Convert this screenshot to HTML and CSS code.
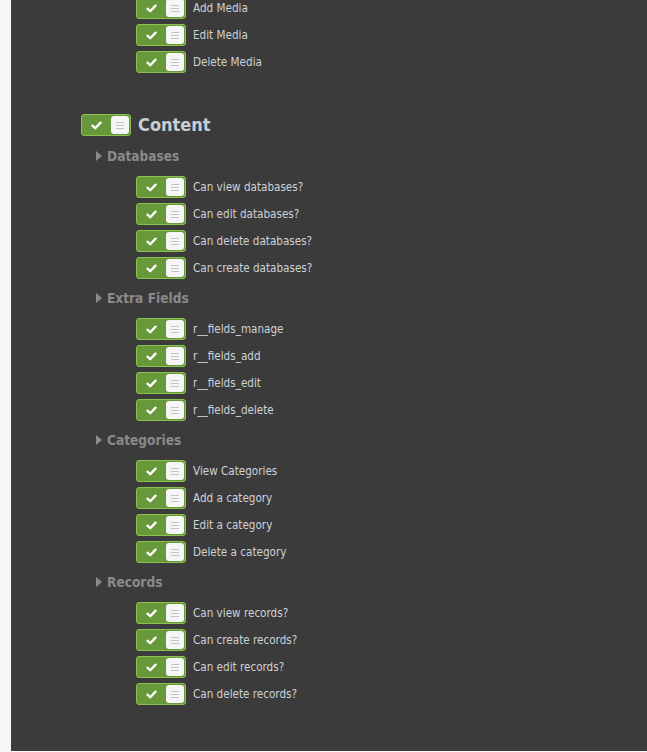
FILE: index.html
```html
<!DOCTYPE html>
<html>
<head>
<meta charset="utf-8">
<link rel="stylesheet" href="styles.css">
</head>
<body>
<div class="panel">
  <ul class="perms top">
    <li class="perm"><span class="toggle"><span class="on"><svg viewBox="0 0 12 10" class="chk"><path d="M1.5 5.2 L4.6 8 L10.5 1.8" /></svg></span><span class="knob"><i></i><i></i><i></i></span></span><span class="label">Add Media</span></li>
    <li class="perm"><span class="toggle"><span class="on"><svg viewBox="0 0 12 10" class="chk"><path d="M1.5 5.2 L4.6 8 L10.5 1.8" /></svg></span><span class="knob"><i></i><i></i><i></i></span></span><span class="label">Edit Media</span></li>
    <li class="perm"><span class="toggle"><span class="on"><svg viewBox="0 0 12 10" class="chk"><path d="M1.5 5.2 L4.6 8 L10.5 1.8" /></svg></span><span class="knob"><i></i><i></i><i></i></span></span><span class="label">Delete Media</span></li>
  </ul>

  <div class="group">
    <div class="group-head"><span class="toggle"><span class="on"><svg viewBox="0 0 12 10" class="chk"><path d="M1.5 5.2 L4.6 8 L10.5 1.8" /></svg></span><span class="knob"><i></i><i></i><i></i></span></span><span class="group-title">Content</span></div>

    <div class="section">
      <div class="section-head"><span class="tri"></span>Databases</div>
      <ul class="perms">
        <li class="perm"><span class="toggle"><span class="on"><svg viewBox="0 0 12 10" class="chk"><path d="M1.5 5.2 L4.6 8 L10.5 1.8" /></svg></span><span class="knob"><i></i><i></i><i></i></span></span><span class="label">Can view databases?</span></li>
        <li class="perm"><span class="toggle"><span class="on"><svg viewBox="0 0 12 10" class="chk"><path d="M1.5 5.2 L4.6 8 L10.5 1.8" /></svg></span><span class="knob"><i></i><i></i><i></i></span></span><span class="label">Can edit databases?</span></li>
        <li class="perm"><span class="toggle"><span class="on"><svg viewBox="0 0 12 10" class="chk"><path d="M1.5 5.2 L4.6 8 L10.5 1.8" /></svg></span><span class="knob"><i></i><i></i><i></i></span></span><span class="label">Can delete databases?</span></li>
        <li class="perm"><span class="toggle"><span class="on"><svg viewBox="0 0 12 10" class="chk"><path d="M1.5 5.2 L4.6 8 L10.5 1.8" /></svg></span><span class="knob"><i></i><i></i><i></i></span></span><span class="label">Can create databases?</span></li>
      </ul>
    </div>

    <div class="section">
      <div class="section-head"><span class="tri"></span>Extra Fields</div>
      <ul class="perms">
        <li class="perm"><span class="toggle"><span class="on"><svg viewBox="0 0 12 10" class="chk"><path d="M1.5 5.2 L4.6 8 L10.5 1.8" /></svg></span><span class="knob"><i></i><i></i><i></i></span></span><span class="label">r__fields_manage</span></li>
        <li class="perm"><span class="toggle"><span class="on"><svg viewBox="0 0 12 10" class="chk"><path d="M1.5 5.2 L4.6 8 L10.5 1.8" /></svg></span><span class="knob"><i></i><i></i><i></i></span></span><span class="label">r__fields_add</span></li>
        <li class="perm"><span class="toggle"><span class="on"><svg viewBox="0 0 12 10" class="chk"><path d="M1.5 5.2 L4.6 8 L10.5 1.8" /></svg></span><span class="knob"><i></i><i></i><i></i></span></span><span class="label">r__fields_edit</span></li>
        <li class="perm"><span class="toggle"><span class="on"><svg viewBox="0 0 12 10" class="chk"><path d="M1.5 5.2 L4.6 8 L10.5 1.8" /></svg></span><span class="knob"><i></i><i></i><i></i></span></span><span class="label">r__fields_delete</span></li>
      </ul>
    </div>

    <div class="section">
      <div class="section-head"><span class="tri"></span>Categories</div>
      <ul class="perms">
        <li class="perm"><span class="toggle"><span class="on"><svg viewBox="0 0 12 10" class="chk"><path d="M1.5 5.2 L4.6 8 L10.5 1.8" /></svg></span><span class="knob"><i></i><i></i><i></i></span></span><span class="label">View Categories</span></li>
        <li class="perm"><span class="toggle"><span class="on"><svg viewBox="0 0 12 10" class="chk"><path d="M1.5 5.2 L4.6 8 L10.5 1.8" /></svg></span><span class="knob"><i></i><i></i><i></i></span></span><span class="label">Add a category</span></li>
        <li class="perm"><span class="toggle"><span class="on"><svg viewBox="0 0 12 10" class="chk"><path d="M1.5 5.2 L4.6 8 L10.5 1.8" /></svg></span><span class="knob"><i></i><i></i><i></i></span></span><span class="label">Edit a category</span></li>
        <li class="perm"><span class="toggle"><span class="on"><svg viewBox="0 0 12 10" class="chk"><path d="M1.5 5.2 L4.6 8 L10.5 1.8" /></svg></span><span class="knob"><i></i><i></i><i></i></span></span><span class="label">Delete a category</span></li>
      </ul>
    </div>

    <div class="section">
      <div class="section-head"><span class="tri"></span>Records</div>
      <ul class="perms">
        <li class="perm"><span class="toggle"><span class="on"><svg viewBox="0 0 12 10" class="chk"><path d="M1.5 5.2 L4.6 8 L10.5 1.8" /></svg></span><span class="knob"><i></i><i></i><i></i></span></span><span class="label">Can view records?</span></li>
        <li class="perm"><span class="toggle"><span class="on"><svg viewBox="0 0 12 10" class="chk"><path d="M1.5 5.2 L4.6 8 L10.5 1.8" /></svg></span><span class="knob"><i></i><i></i><i></i></span></span><span class="label">Can create records?</span></li>
        <li class="perm"><span class="toggle"><span class="on"><svg viewBox="0 0 12 10" class="chk"><path d="M1.5 5.2 L4.6 8 L10.5 1.8" /></svg></span><span class="knob"><i></i><i></i><i></i></span></span><span class="label">Can edit records?</span></li>
        <li class="perm"><span class="toggle"><span class="on"><svg viewBox="0 0 12 10" class="chk"><path d="M1.5 5.2 L4.6 8 L10.5 1.8" /></svg></span><span class="knob"><i></i><i></i><i></i></span></span><span class="label">Can delete records?</span></li>
      </ul>
    </div>
  </div>
</div>
</body>
</html>
```

FILE: styles.css
```css
html, body {
  margin: 0;
  padding: 0;
  background: #f7f7f7;
  overflow: hidden;
}

body {
  font-family: "DejaVu Sans Condensed", "DejaVu Sans", sans-serif;
  font-stretch: condensed;
}

.panel {
  margin-left: 11px;
  height: 751px;
  background: #3b3b3b;
  overflow: hidden;
  box-sizing: border-box;
  padding-top: 0;
}

ul.perms {
  list-style: none;
  margin: 0;
  padding: 0 0 0 125px;
  display: flex;
  flex-direction: column;
  gap: 5px;
}

ul.perms.top {
  margin-top: -3px;
}

.perm {
  display: flex;
  align-items: center;
  height: 22px;
  gap: 7px;
}

.label {
  font-size: 11.6px;
  color: #cdd2d8;
  line-height: 22px;
  white-space: nowrap;
}

.toggle {
  box-sizing: border-box;
  width: 50px;
  height: 22px;
  border: 1px solid #8cc152;
  border-radius: 3px;
  background: #67993a;
  display: flex;
  align-items: center;
  flex: none;
}

.toggle .on {
  width: 29px;
  display: flex;
  justify-content: center;
  align-items: center;
}

.chk {
  width: 11px;
  height: 9px;
  fill: none;
  stroke: #ffffff;
  stroke-width: 2.6;
  stroke-linecap: round;
  stroke-linejoin: round;
}

.knob {
  width: 18px;
  height: 18px;
  background: #f6f6f6;
  border-radius: 3px;
  display: flex;
  flex-direction: column;
  justify-content: center;
  align-items: center;
  gap: 2px;
}

.knob i {
  display: block;
  width: 8px;
  height: 1px;
  background: #c4c4c4;
}

.group {
  margin-top: 41px;
  padding-left: 70px;
}

.group-head {
  display: flex;
  align-items: center;
  gap: 7px;
  height: 22px;
}

.group-title {
  font-size: 18px;
  font-weight: bold;
  color: #c9ced4;
  line-height: 22px;
}

.section {
  padding-left: 15px;
  margin-top: 10px;
}

.section + .section {
  margin-top: 9px;
}

.section .perms {
  padding-left: 40px;
}

.section-head {
  display: flex;
  align-items: center;
  height: 20px;
  margin-bottom: 10px;
  font-size: 13.6px;
  font-weight: bold;
  color: #8a8a8a;
}

.tri {
  width: 0;
  height: 0;
  border-top: 5px solid transparent;
  border-bottom: 5px solid transparent;
  border-left: 6px solid #8a8a8a;
  margin-right: 5px;
}
```
